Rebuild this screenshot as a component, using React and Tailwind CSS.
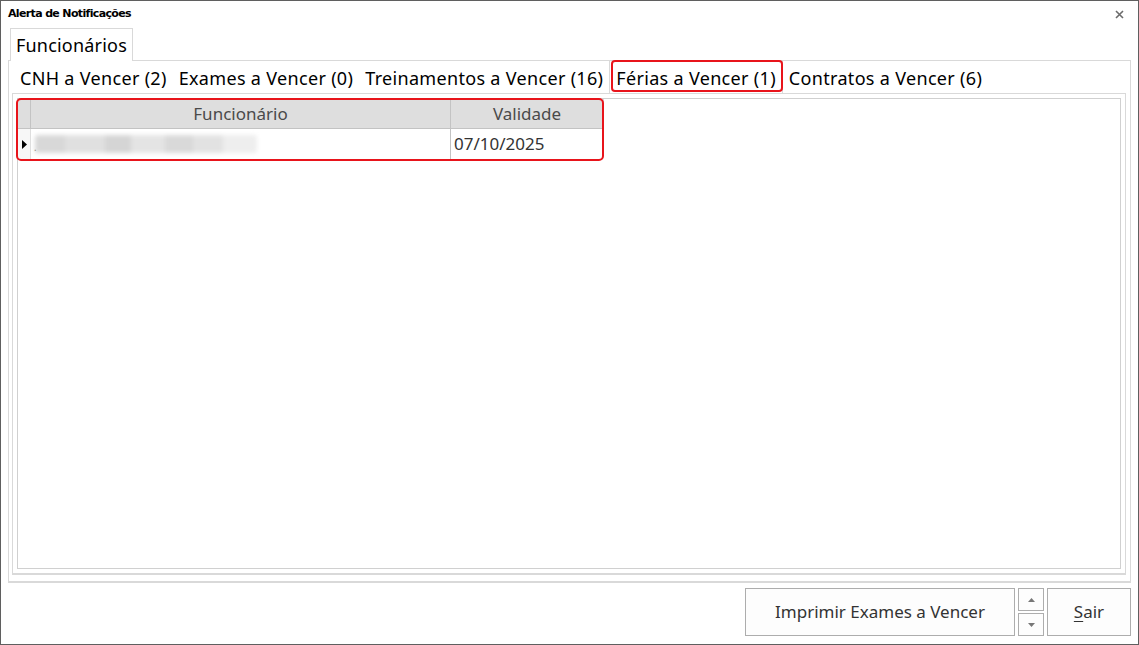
import React from 'react'

const FONT = { fontFamily: '"Noto Sans", "Open Sans", sans-serif' }

const TABS = [
  { label: 'CNH a Vencer (2)' },
  { label: 'Exames a Vencer (0)' },
  { label: 'Treinamentos a Vencer (16)' },
  { label: 'Férias a Vencer (1)', active: true },
  { label: 'Contratos a Vencer (6)' },
]

function InnerTab({ tab }) {
  return (
    <div
      className={
        'relative h-full flex items-center pt-[2px] px-[6px] text-[18px] tracking-[0.32px] text-black' +
        (tab.active ? ' border-x border-[#d9d9d9] bg-white' : '')
      }
    >
      <span className="whitespace-nowrap">{tab.label}</span>
      {tab.active && (
        <div className="absolute left-[1px] right-[-1px] top-[-1px] bottom-[1px] border-2 border-[#e8141b] rounded-[4px]" />
      )}
    </div>
  )
}

function Grid() {
  return (
    <div className="relative w-[586px]">
      <div className="flex h-[30px] bg-[#dedede] border-b border-[#c3c3c3] text-[17px] text-[#4a4a4a]">
        <div className="w-[13px] border-r border-[#c3c3c3]" />
        <div className="w-[420px] border-r border-[#c3c3c3] flex items-center justify-center">Funcionário</div>
        <div className="w-[152px] flex items-center justify-center">Validade</div>
      </div>
      <div className="flex h-[30px] bg-white text-[17px] text-[#333]">
        <div className="w-[13px] flex items-center justify-center border-r border-[#dedede] bg-[#f7f7f7]">
          <svg width="5" height="9" viewBox="0 0 5 9">
            <path d="M0 0 L5 4.5 L0 9 Z" fill="#000" />
          </svg>
        </div>
        <div className="w-[420px] border-r border-[#c3c3c3] flex items-center pl-[3px] relative">
          <span className="absolute left-[3px] bottom-[7px] text-[10px] leading-none text-[#555]">.</span>
          <div className="ml-[1px] h-[18px] w-[222px] flex rounded-[3px] overflow-hidden blur-[2px]">
            <div className="w-[30px] bg-[#d8d8d8]" />
            <div className="w-[40px] bg-[#e0e0e0]" />
            <div className="w-[26px] bg-[#d5d5d5]" />
            <div className="w-[34px] bg-[#e4e4e4]" />
            <div className="w-[28px] bg-[#d9d9d9]" />
            <div className="w-[30px] bg-[#e2e2e2]" />
            <div className="w-[34px] bg-[#eeeeee]" />
          </div>
        </div>
        <div className="w-[152px] flex items-center pl-[3px]">07/10/2025</div>
      </div>
      <div className="absolute left-[-2px] top-[-1px] w-[588px] h-[63px] border-2 border-[#e8141b] rounded-[5px]" />
    </div>
  )
}

export default function App() {
  return (
    <div style={FONT} className="w-[1139px] h-[645px] border border-[#5f5f5f] bg-white flex flex-col overflow-hidden">
      <div className="h-[27px] flex items-center justify-between pl-[7px] pr-[14px]">
        <span
          className="text-[11px] font-bold text-black"
          style={{ fontFamily: '"DejaVu Sans", "Liberation Sans", sans-serif', letterSpacing: '-0.65px' }}
        >
          Alerta de Notificações
        </span>
        <svg width="9" height="9" viewBox="0 0 9 9">
          <path d="M1 1 L8 8 M8 1 L1 8" stroke="#6b6b6b" strokeWidth="1.6" />
        </svg>
      </div>

      <div className="flex pl-[9px] h-[32px]">
        <div className="h-[33px] px-[5px] border border-b-0 border-[#d9d9d9] bg-white flex items-center text-[18px] tracking-[0.2px] text-black relative z-10">
          Funcionários
        </div>
      </div>

      <div className="mx-[7px] h-[523px] border border-[#d9d9d9] border-b-2 pl-[3px] pr-[4px] pb-[6px] flex flex-col">
        <div className="flex h-[32px] pl-[2px]">
          {TABS.map((t) => (
            <InnerTab key={t.label} tab={t} />
          ))}
        </div>
        <div className="flex-1 border border-[#d9d9d9] border-b-2 p-[4px]">
          <div className="h-full border border-[#d0d0d0] bg-white">
            <Grid />
          </div>
        </div>
      </div>

      <div className="flex justify-end gap-[3px] pr-[7px] pt-[5px]">
        <button className="w-[270px] h-[48px] border border-[#adadad] bg-[#fdfdfd] text-[17px] text-[#333]">
          Imprimir Exames a Vencer
        </button>
        <div className="w-[26px] h-[48px] flex flex-col gap-[2px]">
          <div className="flex-1 border border-[#adadad] bg-[#fdfdfd] flex items-center justify-center">
            <svg width="7" height="4" viewBox="0 0 7 4"><path d="M0 4 L3.5 0 L7 4 Z" fill="#777" /></svg>
          </div>
          <div className="flex-1 border border-[#adadad] bg-[#fdfdfd] flex items-center justify-center">
            <svg width="7" height="4" viewBox="0 0 7 4"><path d="M0 0 L3.5 4 L7 0 Z" fill="#777" /></svg>
          </div>
        </div>
        <button className="w-[84px] h-[48px] border border-[#adadad] bg-[#fdfdfd] text-[17px] text-[#333]">
          <span className="underline underline-offset-[3px]">S</span>air
        </button>
      </div>
    </div>
  )
}
